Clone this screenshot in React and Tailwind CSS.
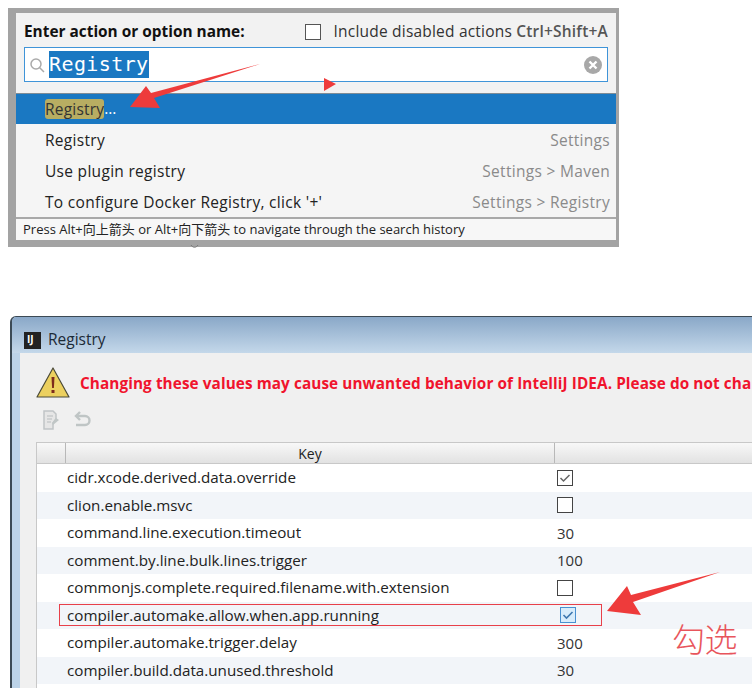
const font = { fontFamily: '"Open Sans", "Noto Sans CJK SC", sans-serif' };

const actions = [
  { name: 'Registry', hint: 'Settings' },
  { name: 'Use plugin registry', hint: 'Settings > Maven' },
  { name: "To configure Docker Registry, click '+'", hint: 'Settings > Registry' },
];

const rows = [
  { key: 'cidr.xcode.derived.data.override', check: 'on' },
  { key: 'clion.enable.msvc', check: 'off' },
  { key: 'command.line.execution.timeout', value: '30' },
  { key: 'comment.by.line.bulk.lines.trigger', value: '100' },
  { key: 'commonjs.complete.required.filename.with.extension', check: 'off' },
  { key: 'compiler.automake.allow.when.app.running', check: 'selected' },
  { key: 'compiler.automake.trigger.delay', value: '300' },
  { key: 'compiler.build.data.unused.threshold', value: '30' },
];

function Checkbox({ state }) {
  if (state === 'selected') {
    return (
      <div className="w-[16px] h-[16px] border border-[#4a90d0] bg-[#d8ecfb] flex items-center justify-center">
        <svg width="12" height="12" viewBox="0 0 12 12" fill="none">
          <path d="M1.5 6l3 3 6-6" stroke="#3f78b0" strokeWidth="1.6" />
        </svg>
      </div>
    );
  }
  return (
    <div className="w-[16px] h-[16px] border border-[#444] bg-white flex items-center justify-center">
      {state === 'on' && (
        <svg width="12" height="12" viewBox="0 0 12 12" fill="none">
          <path d="M1.5 6l3 3 6-6" stroke="#666" strokeWidth="1.5" />
        </svg>
      )}
    </div>
  );
}

function RedArrow({ className, width, height, viewBox, d }) {
  return (
    <svg className={className} width={width} height={height} viewBox={viewBox}>
      <path d={d} fill="#ee3b3b" />
    </svg>
  );
}

function ActionsPopup() {
  return (
    <div className="relative w-[611px] h-[239px] ml-2 bg-[#f2f2f2] border-[#a3a3a3] border-l-[8px] border-t-[5px] border-r-[3px] border-b-[7px] flex flex-col">
      <div className="h-[34px] flex items-center justify-between pt-[3px] pl-[8px] pr-[8px]">
        <span className="text-[15.4px] font-bold text-[#111] whitespace-nowrap">Enter action or option name:</span>
        <div className="flex items-center gap-[13px]">
          <div className="w-[16px] h-[16px] border border-[#555] bg-white" />
          <span className="text-[15.5px] tracking-[0.2px] text-[#333] whitespace-nowrap">
            Include disabled actions <span className="font-semibold text-[#555]">Ctrl+Shift+A</span>
          </span>
        </div>
      </div>
      <div className="h-[35px] ml-[8px] mr-[8px] bg-white border border-[#3f94d8] flex items-center pl-[4px] pr-[5px] justify-between">
        <div className="flex items-center gap-[4px]">
          <svg width="16" height="16" viewBox="0 0 16 16" fill="none">
            <circle cx="7" cy="7" r="5" stroke="#aaa" strokeWidth="1.5" />
            <path d="M10.5 10.5L15 15" stroke="#aaa" strokeWidth="1.5" />
          </svg>
          <span className="bg-[#1a78c2] text-white text-[20px] leading-[27px] tracking-[0.4px]" style={{ fontFamily: '"DejaVu Sans Mono", monospace' }}>Registry</span>
        </div>
        <svg width="18" height="18" viewBox="0 0 18 18">
          <circle cx="9" cy="9" r="9" fill="#a8a8a8" />
          <path d="M5.5 5.5l7 7M12.5 5.5l-7 7" stroke="#fff" strokeWidth="2.4" />
        </svg>
      </div>
      <div className="h-[31px] shrink-0 mt-[11px] bg-[#1a78c2] flex items-center pl-[29px] border-t border-[#7f8c96]">
        <span className="bg-[#b8ad62] text-[#333] rounded-[3px] text-[15.5px] tracking-[0.2px] leading-[20px]">Registry</span>
        <span className="text-white text-[15.5px]">...</span>
      </div>
      <div className="flex-1 bg-[#f5f5f5] flex flex-col">
        {actions.map((a) => (
          <div key={a.name} className="h-[31px] flex items-center justify-between pt-[2px] pl-[29px] pr-[6px] text-[15.5px] tracking-[0.3px] whitespace-nowrap">
            <span className="text-[#222]">{a.name}</span>
            <span className="text-[#8a8a8a]">{a.hint}</span>
          </div>
        ))}
      </div>
      <div className="h-[23px] shrink-0 border-t-[2px] border-[#a9a9a9] bg-[#f7f7f7] flex items-center pl-[7px] text-[13px] text-[#222] whitespace-nowrap">
        Press Alt+向上箭头 or Alt+向下箭头 to navigate through the search history
      </div>
    </div>
  );
}

function RegistryDialog() {
  return (
    <div className="mt-[69px] ml-[10px] w-[742px] h-[372px] overflow-hidden rounded-tl-[6px] border-l-[2px] border-t border-[#3c4a55] bg-[#bcd3e8] flex flex-col">
      <div className="h-[36px] shrink-0 flex items-center pt-[10px] pl-[12px] gap-[7px] bg-gradient-to-b from-[#8aa8c8] to-[#c4d8ea]">
        <div className="w-[17px] h-[17px] bg-[#222] text-white text-[10px] font-bold leading-none pt-[2px] pl-[3px]">IJ</div>
        <span className="text-[15.5px] text-[#1c2a36]">Registry</span>
      </div>
      <div className="flex-1 ml-[8px] bg-[#f0f0f0] flex flex-col min-h-0">
        <div className="h-[51px] shrink-0 flex items-center pt-[9px] pl-[16px] gap-[10px] whitespace-nowrap">
          <svg width="34" height="34" viewBox="0 0 34 34" className="shrink-0">
            <path d="M17 2L33 31H1z" fill="#ecd05f" stroke="#4b4a38" strokeWidth="1.2" strokeLinejoin="round" />
            <path d="M15.5 11h3l-.6 11h-1.8z" fill="#7d2b1c" />
            <rect x="15.5" y="24" width="3" height="3" fill="#7d2b1c" />
          </svg>
          <span className="text-[15.3px] tracking-[0.09px] font-bold text-[#f0142d]">Changing these values may cause unwanted behavior of IntelliJ IDEA. Please do not cha</span>
        </div>
        <div className="h-[38px] shrink-0 flex items-start pt-[6px] pl-[23px] gap-[13px]">
          <svg width="18" height="20" viewBox="0 0 18 20" fill="none">
            <path d="M1 1h9l3 3v5l-3 4v6H1z" fill="#e6e6e6" stroke="#c0c4c6" strokeWidth="1.5" />
            <path d="M4 6h6M4 9h5M4 12h4" stroke="#b8bcbe" />
            <path d="M10 15l6-5-3-2-4 5z" fill="#c0c6c6" />
          </svg>
          <svg width="18" height="18" viewBox="0 0 18 18" fill="none">
            <path d="M6 2L2 6l4 4" stroke="#bfc5c5" strokeWidth="2.4" />
            <path d="M3 6h8a4 4 0 010 9H2" stroke="#bfc5c5" strokeWidth="2.4" />
          </svg>
        </div>
        <div className="ml-[16px] flex-1 border-l border-t border-[#c8c8c8] bg-white flex flex-col min-h-0">
          <div className="h-[21px] shrink-0 flex bg-gradient-to-b from-[#f8f8f8] to-[#e2e2e2] border-b border-[#c8c8c8] text-[14px] text-[#222]">
            <div className="w-[29px] shrink-0 border-r border-[#b8b8b8]" />
            <div className="w-[489px] shrink-0 border-r border-[#b8b8b8] flex items-center justify-center">Key</div>
            <div className="flex-1" />
          </div>
          {rows.map((r, i) => (
            <div key={r.key} className={`h-[27.5px] shrink-0 flex items-center ${i % 2 ? 'bg-[#f2f5f9]' : 'bg-white'}`}>
              <div className="relative w-[519px] shrink-0 pl-[30px] text-[15.2px] text-[#222] whitespace-nowrap">{r.key}</div>
              <div className="pl-[1px] text-[15px] text-[#333] flex items-center">
                {r.check ? (
                  <div className={r.check === 'selected' ? 'ml-[3px]' : ''}>
                    <Checkbox state={r.check} />
                  </div>
                ) : (
                  r.value
                )}
              </div>
            </div>
          ))}
          <div className="flex-1 bg-white" />
        </div>
      </div>
    </div>
  );
}

export default function App() {
  return (
    <div className="relative w-[752px] h-[688px] overflow-hidden bg-white pt-2" style={font}>
      <ActionsPopup />
      <RegistryDialog />

      {/* annotations drawn over the screenshots */}
      <RedArrow className="absolute left-[128px] top-[63px]" width="134" height="48" viewBox="0 0 134 48" d="M132 1L26 35l6 10L2 44 18 23l5 7z" />
      <RedArrow className="absolute left-[324px] top-[78px]" width="12" height="13" viewBox="0 0 12 13" d="M0 0l12 6L0 13z" />
      <div className="absolute left-[59px] top-[604px] w-[543px] h-[22px] border border-[#e8404a]" />
      <RedArrow className="absolute left-[605px] top-[571px]" width="116" height="46" viewBox="0 0 116 46" d="M115 1L28 31l8 13L2 40 22 15l4 9z" />
      <span className="absolute left-[672px] top-[618px] text-[33px] leading-[40px] text-[#e8555c] tracking-[-0.5px]" style={{ fontFamily: '"Noto Sans CJK SC", sans-serif', fontWeight: 300 }}>勾选</span>
      <svg className="absolute left-[190px] top-[244px]" width="10" height="5" viewBox="0 0 10 5" fill="none">
        <path d="M1 1c2 3 5 3 7 0" stroke="#777" strokeWidth="1" />
      </svg>
    </div>
  );
}
